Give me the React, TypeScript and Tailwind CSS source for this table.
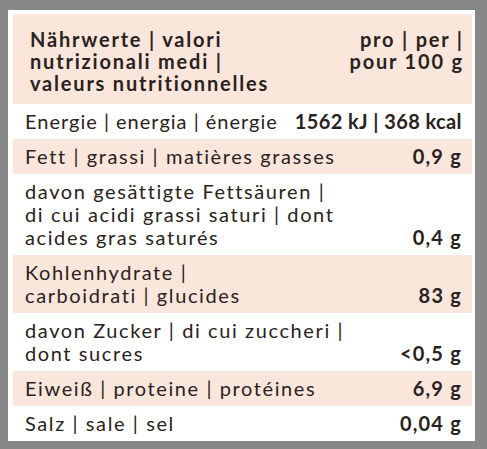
import React from "react";

const rows: { label: React.ReactNode; value: string; pink: boolean; vt: string; lt: string }[] = [
  { label: "Energie | energia | énergie", value: "1562 kJ | 368 kcal", pink: false, vt: "tracking-[0.4px]", lt: "tracking-[1px]" },
  { label: "Fett | grassi | matières grasses", value: "0,9 g", pink: true, vt: "tracking-[1.2px]", lt: "tracking-[1.6px]" },
  {
    label: (
      <>
        davon gesättigte Fettsäuren |<br />di cui acidi grassi saturi | dont
        <br />
        acides gras saturés
      </>
    ),
    value: "0,4 g",
    pink: false,
    vt: "tracking-[1.2px]",
    lt: "tracking-[1.6px]",
  },
  {
    label: (
      <>
        Kohlenhydrate |<br />carboidrati | glucides
      </>
    ),
    value: "83 g",
    pink: true,
    vt: "tracking-[1.2px]",
    lt: "tracking-[1.6px]",
  },
  {
    label: (
      <>
        davon Zucker | di cui zuccheri |<br />dont sucres
      </>
    ),
    value: "<0,5 g",
    pink: false,
    vt: "tracking-[1.2px]",
    lt: "tracking-[1.6px]",
  },
  { label: "Eiweiß | proteine | protéines", value: "6,9 g", pink: true, vt: "tracking-[1.2px]", lt: "tracking-[1.6px]" },
  { label: "Salz | sale | sel", value: "0,04 g", pink: false, vt: "tracking-[1.2px]", lt: "tracking-[1.6px]" },
];

export default function App() {
  return (
    <div
      className="w-[487px] h-[449px] bg-[#878787] pt-[10px] pl-[8px]"
      style={{ fontFamily: "Lato, 'Liberation Sans', sans-serif" }}
    >
      <div className="w-[467px] h-[431px] bg-white pt-[4px] pl-[5px] pr-[3px] text-[#2a2220]">
        <div className="bg-[#fbe6dc] flex justify-between pl-[17px] pr-[10px] pt-[14px] pb-[10px] font-bold text-[20px] leading-[22px] tracking-[1.8px]">
          <div>
            Nährwerte | valori
            <br />
            nutrizionali medi |
            <br />
            valeurs nutritionnelles
          </div>
          <div className="text-right mr-[-1.8px]">
            pro | per |
            <br />
            pour 100 g
          </div>
        </div>
        {rows.map((r, i) => (
          <div
            key={i}
            className={`flex justify-between items-end gap-2 pl-[12px] pr-[10px] py-[6px] text-[20px] leading-[23px] ${
              r.pink ? "bg-[#fbe6dc]" : "bg-white"
            } ${i === 0 ? "py-[5px]" : ""}`}
          >
            <div className={`whitespace-nowrap ${r.lt}`}>{r.label}</div>
            <div className={`font-bold whitespace-nowrap ${r.vt}`}>{r.value}</div>
          </div>
        ))}
      </div>
    </div>
  );
}
